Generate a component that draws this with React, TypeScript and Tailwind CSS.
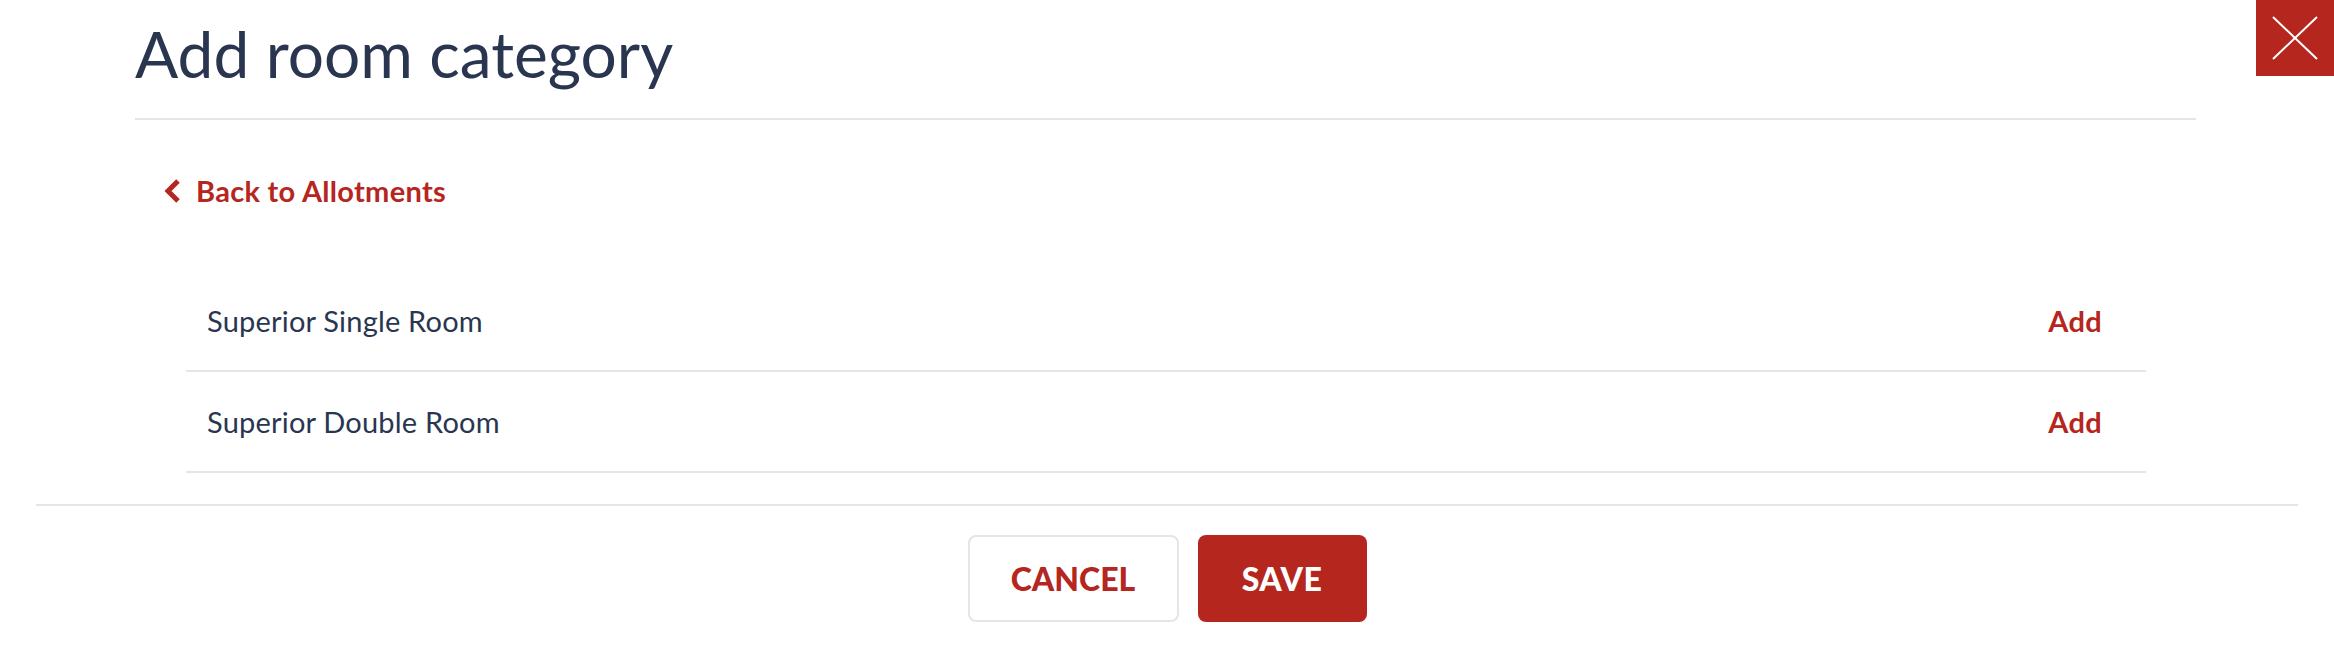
import React from 'react';

interface RoomCategory {
  id: number;
  name: string;
}

const categories: RoomCategory[] = [
  { id: 1, name: 'Superior Single Room' },
  { id: 2, name: 'Superior Double Room' },
];

const AddRoomCategory: React.FC = () => {
  return (
    <div className="relative min-h-[648px] bg-white font-['Lato',sans-serif] text-[#2a3650]">
      {/* Close */}
      <button className="absolute top-0 right-0 flex h-[76px] w-[78px] items-center justify-center bg-[#b5261e]">
        <svg width="48" height="44" viewBox="0 0 48 44" fill="none" stroke="white" strokeWidth="2">
          <line x1="2" y1="1" x2="46" y2="43" />
          <line x1="46" y1="1" x2="2" y2="43" />
        </svg>
      </button>

      {/* Header */}
      <div className="ml-[135px] mr-[138px] border-b-2 border-[#e5e5e5] pt-[22px] pb-[32px]">
        <h1 className="text-[64px] leading-[64px] font-normal">Add room category</h1>
      </div>

      {/* Back link */}
      <a href="#" className="ml-[163px] mt-[53px] flex w-fit items-center gap-[15px] text-[29px] font-bold leading-[36px] tracking-[0.3px] text-[#b5261e]">
        <svg width="18" height="24" viewBox="0 0 18 24" fill="none" stroke="currentColor" strokeWidth="5">
          <polyline points="15,2 5,12 15,22" />
        </svg>
        <span>Back to Allotments</span>
      </a>

      {/* Room list */}
      <div className="ml-[186px] mr-[188px] mt-[62px]">
        {categories.map((room) => (
          <div
            key={room.id}
            className="flex h-[101px] items-center justify-between border-b-2 border-[#e5e5e5] pl-[21px] pr-[44px]"
          >
            <span className="text-[29px] tracking-[0.2px]">{room.name}</span>
            <button className="text-[29px] font-bold tracking-[0.3px] text-[#b5261e]">Add</button>
          </div>
        ))}
      </div>

      {/* Footer */}
      <div className="mx-[36px] mt-[31px] flex justify-center gap-[19px] border-t-2 border-[#e5e5e5] pt-[29px]">
        <button className="h-[87px] w-[211px] rounded-[8px] border-2 border-[#e5e5e5] text-[32px] font-black text-[#b5261e]">
          CANCEL
        </button>
        <button className="h-[87px] w-[169px] rounded-[8px] bg-[#b5261e] text-[32px] font-black tracking-[0.5px] text-white">
          SAVE
        </button>
      </div>
    </div>
  );
};

export default function App() {
  return <AddRoomCategory />;
}
